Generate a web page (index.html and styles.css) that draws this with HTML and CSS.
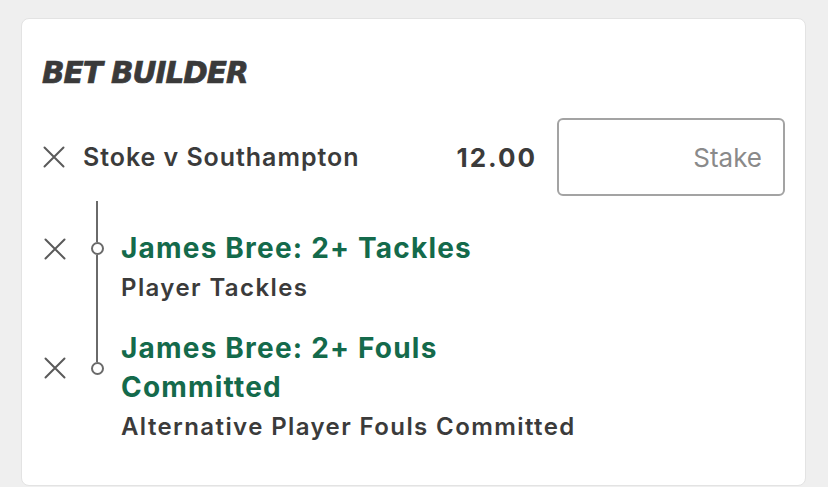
FILE: index.html
```html
<!DOCTYPE html>
<html lang="en">
<head>
<meta charset="utf-8">
<title>Bet Builder</title>
<link rel="stylesheet" href="styles.css">
</head>
<body>
<div class="card">
  <h1 class="title">BET BUILDER</h1>
  <div class="header-row">
    <div class="x-cell">
      <svg class="x-icon" viewBox="0 0 22 22" width="22" height="22"><path d="M1.5 1.5 L20.5 20.5 M20.5 1.5 L1.5 20.5" /></svg>
    </div>
    <div class="match">Stoke v Southampton</div>
    <div class="odds">12.00</div>
    <div class="stake">Stake</div>
  </div>
  <div class="legs">
    <div class="leg">
      <div class="row gap-row gap-first"><div class="x-col"></div><div class="rail-col"><span class="rail"></span></div></div>
      <div class="row head-row">
        <div class="x-col"><svg class="x-icon" viewBox="0 0 22 22" width="22" height="22"><path d="M1.5 1.5 L20.5 20.5 M20.5 1.5 L1.5 20.5" /></svg></div>
        <div class="rail-col node-col"><span class="seg"></span><span class="node"></span><span class="seg"></span></div>
        <div class="leg-title">James Bree: 2+ Tackles</div>
      </div>
      <div class="row sub-row">
        <div class="x-col"></div>
        <div class="rail-col"><span class="rail"></span></div>
        <div class="leg-sub">Player Tackles</div>
      </div>
    </div>
    <div class="leg last">
      <div class="row gap-row"><div class="x-col"></div><div class="rail-col"><span class="rail"></span></div></div>
      <div class="row head-row">
        <div class="x-col"><svg class="x-icon" viewBox="0 0 22 22" width="22" height="22"><path d="M1.5 1.5 L20.5 20.5 M20.5 1.5 L1.5 20.5" /></svg></div>
        <div class="rail-col node-col"><span class="seg"></span><span class="node"></span><span class="seg seg-end"></span></div>
        <div class="leg-title">James Bree: 2+ Fouls<br>Committed</div>
      </div>
      <div class="row sub-row">
        <div class="x-col"></div>
        <div class="rail-col"></div>
        <div class="leg-sub">Alternative Player Fouls Committed</div>
      </div>
    </div>
  </div>
</div>
</body>
</html>
```

FILE: styles.css
```css
* { box-sizing: border-box; }

html, body {
  margin: 0;
  padding: 0;
}

body {
  background: #efefef;
  font-family: Inter, Roboto, "Liberation Sans", sans-serif;
  color: #3b3b3b;
  padding: 18px 22px 0 21px;
  height: 487px;
  overflow: hidden;
}

.card {
  width: 785px;
  height: 468px;
  background: #ffffff;
  border: 1px solid #e3e3e3;
  border-radius: 8px;
  padding: 36px 20px 0 20px;
}

.title {
  margin: 0;
  font-family: "DejaVu Sans", sans-serif;
  font-weight: 700;
  font-style: italic;
  font-size: 29.5px;
  line-height: 36px;
  color: #3a3a3a;
  letter-spacing: -1px;
  -webkit-text-stroke: 0.7px #3a3a3a;
}

.header-row {
  display: flex;
  align-items: center;
  height: 78px;
  margin-top: 27px;
}

.x-cell {
  width: 41px;
  display: flex;
  align-items: center;
  padding-left: 1px;
}

.x-icon {
  display: block;
  fill: none;
  stroke: #5a5a5a;
  stroke-width: 2;
  stroke-linecap: round;
}

.match {
  flex: 1;
  font-weight: 600;
  font-size: 25px;
  letter-spacing: 0.95px;
  color: #3b3b3b;
}

.odds {
  font-weight: 700;
  font-size: 26px;
  letter-spacing: 2px;
  color: #3b3b3b;
  margin-right: 20px;
}

.stake {
  width: 228px;
  height: 78px;
  border: 2px solid #a3a3a3;
  border-radius: 6px;
  display: flex;
  align-items: center;
  justify-content: flex-end;
  padding-right: 21px;
  font-size: 26px;
  color: #8a8a8a;
}

.legs {
  margin-top: 5px;
}

.row {
  display: flex;
}

.x-col {
  width: 37px;
  display: flex;
  align-items: center;
  padding-left: 2px;
}

.rail-col {
  width: 36px;
  display: flex;
  flex-direction: column;
  align-items: center;
}

.rail {
  flex: 1;
  width: 2px;
  background: #6a6a6a;
}

.gap-row { height: 22px; }
.gap-first { height: 28px; }

.node-col .seg {
  flex: 1;
  width: 2px;
  background: #6a6a6a;
}

.node-col .seg-end {
  background: transparent;
}

.node {
  width: 13px;
  height: 13px;
  border: 2px solid #6a6a6a;
  border-radius: 50%;
  background: #fff;
  flex: none;
}

.leg-title {
  margin-left: 6px;
  font-weight: 700;
  font-size: 28px;
  line-height: 39px;
  letter-spacing: 1.2px;
  color: #146a4b;
}

.leg-sub {
  margin-left: 6px;
  font-weight: 600;
  font-size: 24px;
  line-height: 39px;
  letter-spacing: 1.4px;
  color: #3b3b3b;
}
```
